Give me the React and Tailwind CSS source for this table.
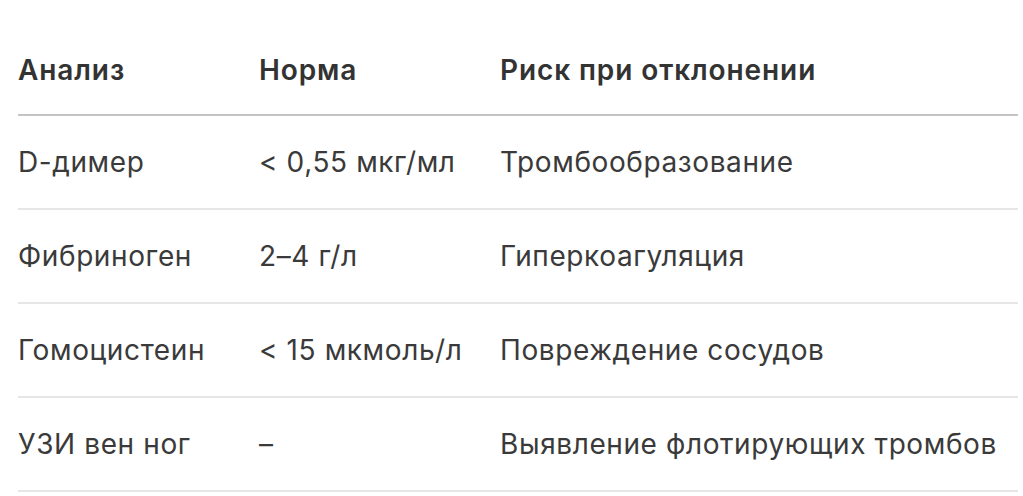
export default function App() {
  const rows = [
    ["D-димер", "< 0,55 мкг/мл", "Тромбообразование"],
    ["Фибриноген", "2–4 г/л", "Гиперкоагуляция"],
    ["Гомоцистеин", "< 15 мкмоль/л", "Повреждение сосудов"],
    ["УЗИ вен ног", "–", "Выявление флотирующих тромбов"],
  ];
  return (
    <div className="w-[1023px] h-[496px] bg-white pl-[18px] pr-[5px] pt-[26px]" style={{ fontFamily: "Inter, 'Noto Sans', sans-serif" }}>
      <div className="grid grid-cols-[241px_241px_1fr] border-b-2 border-[#c4c4c4] h-[90px] items-center text-[28px] tracking-[0.9px] font-semibold text-[#333333]">
        <div>Анализ</div>
        <div>Норма</div>
        <div>Риск при отклонении</div>
      </div>
      {rows.map((r, i) => (
        <div key={i} className="grid grid-cols-[241px_241px_1fr] border-b-2 border-[#e6e6e6] h-[94px] items-center text-[28px] tracking-[0.6px] text-[#3a3a3a]">
          <div>{r[0]}</div>
          <div>{r[1]}</div>
          <div>{r[2]}</div>
        </div>
      ))}
    </div>
  );
}
